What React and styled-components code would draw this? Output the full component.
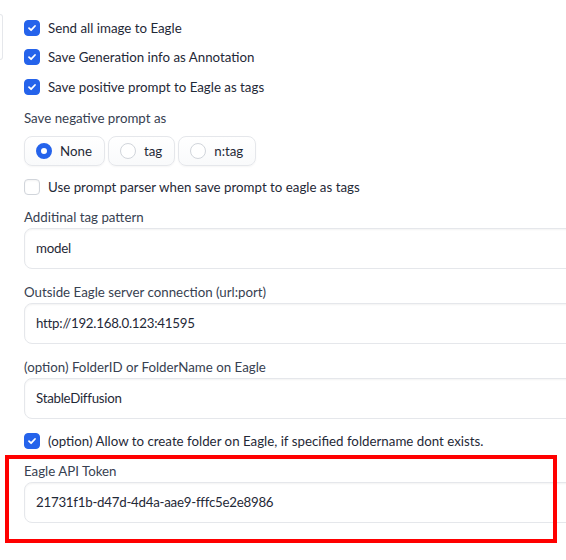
import React, { useState } from 'react';
import styled, { createGlobalStyle } from 'styled-components';

const GlobalStyle = createGlobalStyle`
  html, body {
    margin: 0;
    padding: 0;
    background: #ffffff;
    overflow: hidden;
  }
  body {
    font-family: Lato, "Noto Sans", "Liberation Sans", sans-serif;
    font-size: 13.3px;
    color: #1f2937;
  }
`;

const Page = styled.div`
  display: flex;
  width: 620px;
  height: 560px;
`;

// right edge of the column sitting to the left, cut off by the window
const SideEdge = styled.div`
  flex: none;
  width: 3px;
  height: 46px;
  margin-top: 14px;
  border: 1px solid #e5e7eb;
  border-left: none;
  border-radius: 0 6px 6px 0;
  box-sizing: border-box;
`;

const Column = styled.div`
  flex: 1;
  display: flex;
  flex-direction: column;
  padding: 13px 0 0 21px;
`;

const CheckRow = styled.label`
  display: flex;
  align-items: center;
  gap: 8px;
  height: ${(p) => p.h || 29.5}px;
  margin-top: ${(p) => p.mt || 0}px;
  cursor: pointer;
  color: #1f2937;
  line-height: 20px;
`;

const Box = styled.span`
  flex: none;
  width: 16px;
  height: 16px;
  border-radius: 4px;
  box-sizing: border-box;
  display: flex;
  align-items: center;
  justify-content: center;
  background: ${(p) => (p.checked ? '#2563eb' : '#ffffff')};
  border: 1px solid ${(p) => (p.checked ? '#2563eb' : '#d1d5db')};
  box-shadow: ${(p) => (p.checked ? 'none' : 'inset 0 1px 2px rgba(0,0,0,0.05)')};
`;

const Label = styled.div`
  height: 20px;
  line-height: 20px;
  margin-top: ${(p) => p.mt || 0}px;
  color: #374151;
`;

const RadioGroup = styled.div`
  display: flex;
  gap: 3px;
  margin-top: 8px;
`;

const RadioItem = styled.label`
  display: flex;
  align-items: center;
  gap: 8px;
  height: 30px;
  padding: 0 12px 0 11px;
  box-sizing: border-box;
  border: 1px solid #e5e7eb;
  border-radius: 8px;
  background: linear-gradient(#ffffff, #f9fafb);
  box-shadow: 0 1px 2px rgba(0, 0, 0, 0.04);
  cursor: pointer;
  color: #1f2937;
`;

const Dot = styled.span`
  width: 16px;
  height: 16px;
  border-radius: 50%;
  box-sizing: border-box;
  background: #ffffff;
  border: ${(p) => (p.checked ? '5px solid #2563eb' : '1px solid #d1d5db')};
`;

const Field = styled.div`
  position: relative;
  display: flex;
  flex-direction: column;
  margin-top: ${(p) => p.mt || 0}px;
`;

const TextInput = styled.input`
  width: 560px;
  height: 41px;
  margin-top: 1px;
  padding: 0 11px;
  box-sizing: border-box;
  border: 1px solid #e5e7eb;
  border-radius: 8px;
  background: #ffffff;
  box-shadow: inset 0 1px 2px rgba(0, 0, 0, 0.05);
  font-family: inherit;
  font-size: 13.3px;
  letter-spacing: -0.25px;
  color: #1f2937;
  outline: none;
`;

const Highlight = styled.div`
  position: absolute;
  top: -6px;
  left: -19px;
  width: 552px;
  height: 88px;
  border: 4px solid #ff0000;
  box-sizing: border-box;
  pointer-events: none;
`;

function Check({ checked, onToggle, children, mt, h }) {
  return (
    <CheckRow mt={mt} h={h} onClick={onToggle}>
      <Box checked={checked}>
        {checked && (
          <svg width="10" height="10" viewBox="0 0 10 10">
            <path d="M2 5.2 L4.1 7.2 L8 3" fill="none" stroke="#fff" strokeWidth="1.8" strokeLinecap="round" strokeLinejoin="round" />
          </svg>
        )}
      </Box>
      <span>{children}</span>
    </CheckRow>
  );
}

export default function App() {
  const [checks, setChecks] = useState({
    sendAll: true,
    genInfo: true,
    posTags: true,
    parser: false,
    createFolder: true,
  });
  const [negative, setNegative] = useState('None');

  const toggle = (key) => setChecks({ ...checks, [key]: !checks[key] });

  return (
    <>
      <GlobalStyle />
      <Page>
        <SideEdge />
        <Column>
          <Check checked={checks.sendAll} onToggle={() => toggle('sendAll')}>Send all image to Eagle</Check>
          <Check checked={checks.genInfo} onToggle={() => toggle('genInfo')}>Save Generation info as Annotation</Check>
          <Check checked={checks.posTags} onToggle={() => toggle('posTags')}>Save positive prompt to Eagle as tags</Check>

          <Label mt={6}>Save negative prompt as</Label>
          <RadioGroup>
            {['None', 'tag', 'n:tag'].map((opt) => (
              <RadioItem key={opt} onClick={() => setNegative(opt)}>
                <Dot checked={negative === opt} />
                <span>{opt}</span>
              </RadioItem>
            ))}
          </RadioGroup>

          <Check mt={6} h={30} checked={checks.parser} onToggle={() => toggle('parser')}>
            Use prompt parser when save prompt to eagle as tags
          </Check>

          <Field mt={5}>
            <Label>Additinal tag pattern</Label>
            <TextInput defaultValue="model" />
          </Field>
          <Field mt={13}>
            <Label>Outside Eagle server connection (url:port)</Label>
            <TextInput defaultValue="http://192.168.0.123:41595" />
          </Field>
          <Field mt={13}>
            <Label>(option) FolderID or FolderName on Eagle</Label>
            <TextInput defaultValue="StableDiffusion" />
          </Field>

          <Check mt={7} h={30} checked={checks.createFolder} onToggle={() => toggle('createFolder')}>
            (option) Allow to create folder on Eagle, if specified foldername dont exists.
          </Check>

          <Field mt={5}>
            <Label>Eagle API Token</Label>
            <TextInput defaultValue="21731f1b-d47d-4d4a-aae9-fffc5e2e8986" />
            <Highlight />
          </Field>
        </Column>
      </Page>
    </>
  );
}
